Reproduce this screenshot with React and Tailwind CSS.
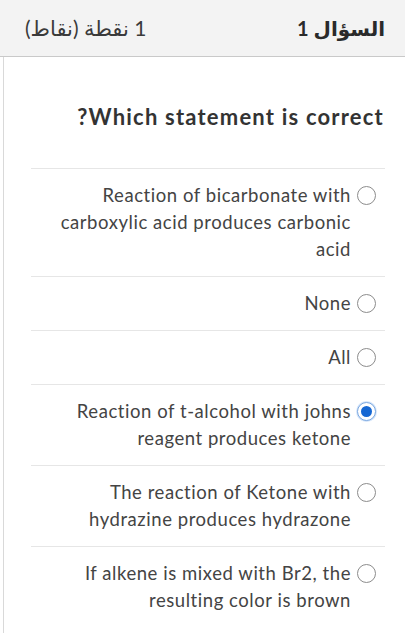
import React from "react";

const options = [
  { text: "Reaction of bicarbonate with carboxylic acid produces carbonic acid" },
  { text: "None" },
  { text: "All" },
  { text: "Reaction of t-alcohol with johns reagent produces ketone", checked: true },
  { text: "The reaction of Ketone with hydrazine produces hydrazone" },
  { text: "If alkene is mixed with Br2, the resulting color is brown" },
];

function Radio({ checked }) {
  if (checked) {
    return (
      <span className="mt-[4px] flex h-[19px] w-[19px] shrink-0 items-center justify-center rounded-full border-[1.5px] border-[#7aa7e0] bg-white shadow-[0_0_0_1px_#d6e6fa]">
        <span className="h-[11px] w-[11px] rounded-full bg-[#1567d3]" />
      </span>
    );
  }
  return (
    <span className="mt-[4px] block h-[19px] w-[19px] shrink-0 rounded-full border-[1.5px] border-[#8c8c8c] bg-white" />
  );
}

export default function App() {
  return (
    <div
      dir="rtl"
      className="h-[633px] w-[405px] overflow-hidden bg-white"
      style={{ fontFamily: "Lato, 'DejaVu Sans', sans-serif" }}
    >
      <div className="flex h-[57px] items-center justify-between border-b border-[#c9c9c9] bg-[#f3f3f3] pl-[25px] pr-[20px]">
        <div className="text-[20px] font-bold text-[#2a2a2a]">السؤال 1</div>
        <div className="text-[21px] text-[#3a3a3a]">1 نقطة (نقاط)</div>
      </div>
      <div className="ml-[3px] h-[576px] border-l border-[#d9d9d9]">
        <div className="pr-[21px] pt-[46px] text-[22px] font-bold leading-[28px] tracking-[1.2px] text-[#333]">
          Which statement is correct?
        </div>
        <div className="ml-[27px] mr-[20px] mt-[37px]">
          {options.map((o, i) => (
            <div key={i} className="flex items-start border-t border-[#e6e6e6] py-[13px] pr-[9px]">
              <Radio checked={o.checked} />
              <div className="mr-[6px] max-w-[294px] text-[18.5px] leading-[27px] tracking-[0.55px] text-[#444]">
                {o.text}
              </div>
            </div>
          ))}
        </div>
      </div>
    </div>
  );
}
